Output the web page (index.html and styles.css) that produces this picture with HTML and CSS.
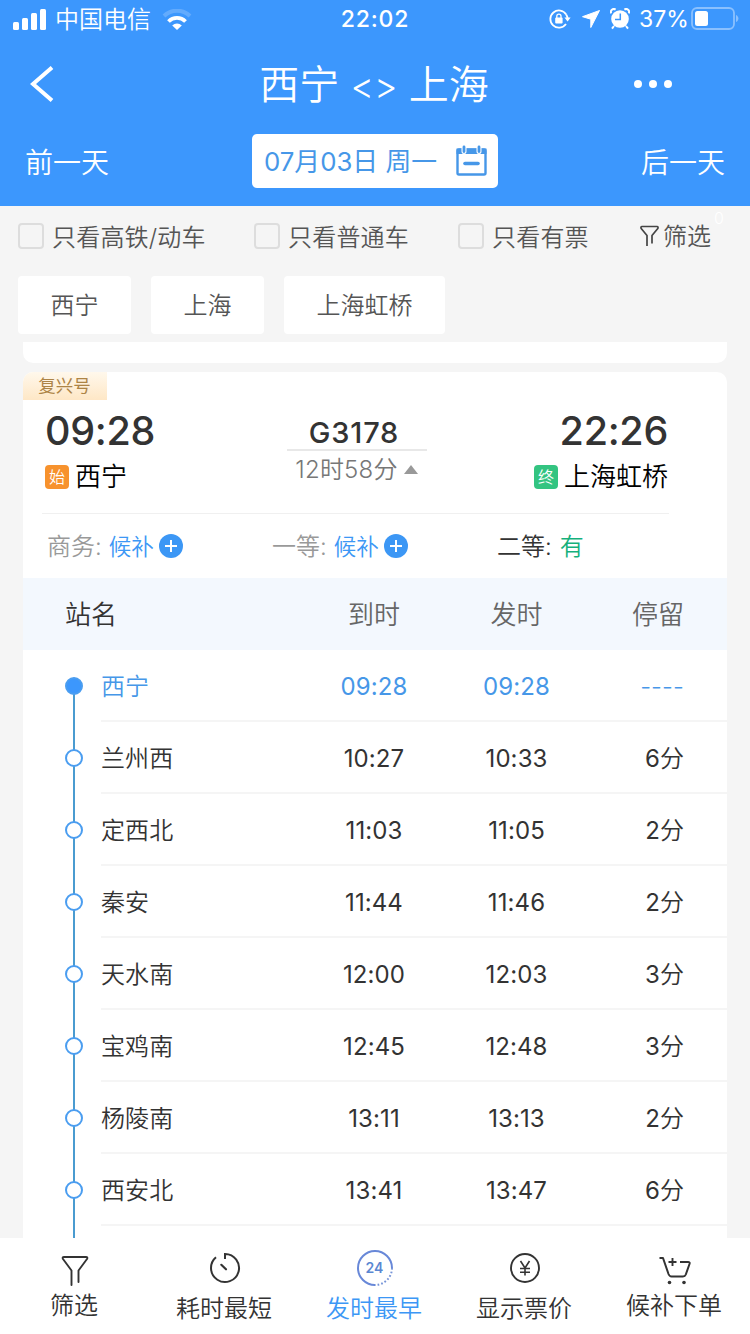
FILE: index.html
```html
<!DOCTYPE html>
<html lang="zh-CN">
<head>
    <meta charset="UTF-8">
    <meta name="viewport" content="width=device-width, initial-scale=1.0">
    <title>西宁 - 上海 车票查询</title>
    <link rel="stylesheet" href="styles.css">
</head>
<body>

<header class="header">
    <div class="status">
        <div class="status-left">
            <svg width="34" height="22" viewBox="0 0 34 22" fill="#fff">
                <rect x="0" y="13" width="6" height="8" rx="1.5"/>
                <rect x="9" y="9" width="6" height="12" rx="1.5"/>
                <rect x="18" y="4" width="6" height="17" rx="1.5"/>
                <rect x="27" y="0" width="6" height="21" rx="1.5"/>
            </svg>
            <span class="carrier">中国电信</span>
            <svg width="30" height="22" viewBox="0 0 30 22" fill="none" stroke="#fff">
                <path d="M2 7a18.5 18.5 0 0 1 26 0" stroke-width="4" opacity=".2"/>
                <path d="M6.5 12.5a12 12 0 0 1 17 0" stroke-width="3.8"/>
                <path d="M15 21l-4.8-4.5a7 7 0 0 1 9.6 0z" fill="#fff" stroke="none"/>
            </svg>
        </div>
        <div class="clock">22:02</div>
        <div class="status-right">
            <svg width="22" height="20" viewBox="0 0 22 20" fill="none" stroke="#fff" stroke-width="1.8">
                <path d="M17.2 5.4A8.6 8.6 0 1 0 17 15"/>
                <path d="M17.2 5.4a8.6 8.6 0 0 1 1.4 4.8"/>
                <path d="M15.4 8.4h6.2l-3 4z" fill="#fff" stroke="none"/>
                <rect x="6.2" y="8.6" width="7.4" height="5.8" rx="1" fill="#fff" stroke="none"/>
                <path d="M7.8 9V7.2a2.1 2.1 0 0 1 4.2 0V9" stroke-width="1.3"/>
            </svg>
            <svg class="arrow" width="20" height="20" viewBox="0 0 20 20" fill="#fff" stroke="#fff" stroke-linejoin="round"><path d="M18.5 1.5L1.5 7.700l8.300 2.500v8.300z"/></svg>
            <svg class="alarm" width="20" height="22" viewBox="0 0 20 22" fill="#fff">
                <circle cx="10" cy="11" r="8.8"/>
                <path d="M1.2 5.4A3 3 0 0 1 5.6 1.6M14.4 1.6a3 3 0 0 1 4.4 3.8M4 18l-2 2.6M16 18l2 2.6" fill="none" stroke="#fff" stroke-width="2"/>
                <path d="M10.3 5.5v6H5" fill="none" stroke="#3c97fd" stroke-width="1.5"/>
            </svg>
            <span class="percent">37%</span>
            <svg width="49" height="24" viewBox="0 0 49 24">
                <rect x="2" y="1" width="42" height="21" rx="5" fill="none" stroke="#fff" stroke-width="1.8" opacity=".4"/>
                <rect x="5" y="4" width="13" height="15" rx="2.5" fill="#fff"/>
                <path d="M46 8v7c1.6-.6 2.4-2 2.4-3.5S47.5 8.600 46 8z" fill="#fff" opacity=".4"/>
            </svg>
        </div>
    </div>

    <div class="nav">
        <svg class="back" width="24" height="36" viewBox="0 0 24 36" fill="none" stroke="#fff" stroke-width="4"><path d="M22 1.5L3 18l19 16.5"/></svg>
        <h1>西宁 <span class="swap">&lt;&gt;</span> 上海</h1>
        <div class="more"><i></i><i></i><i></i></div>
    </div>

    <div class="days">
        <a class="prev">前一天</a>
        <div class="date">
            <span>07月03日 周一</span>
            <svg width="31" height="31" viewBox="0 0 31 31" fill="none" stroke="#4697e8">
                <rect x="1.5" y="4.5" width="28" height="25" rx="1.5" stroke-width="2.4"/>
                <path d="M.5 3.5h30V9H.5z" fill="#4697e8" stroke="none"/>
                <path d="M8 2v4.5M23 2v4.5" stroke="#fff" stroke-width="5" stroke-linecap="round"/>
                <path d="M8 2v4.5M23 2v4.5" stroke-width="2.8" stroke-linecap="round"/>
                <path d="M9 18.5h13" stroke-width="3.6" stroke-linecap="round"/>
            </svg>
        </div>
        <a class="next">后一天</a>
    </div>
</header>

<main>
    <div class="filters">
        <label class="check"><span class="box"></span><span>只看高铁/动车</span></label>
        <label class="check"><span class="box"></span><span>只看普通车</span></label>
        <label class="check"><span class="box"></span><span>只看有票</span></label>
        <div class="filter">
            <svg width="19" height="22" viewBox="0 0 19 22" fill="none" stroke="#444" stroke-width="1.7" stroke-linejoin="round"><path d="M7 21v-10.5L1.2 3.5Q.5 1.5 2 1.5h15q1.5 0 .8 2L12 10.5V18.5"/></svg>
            <span>筛选</span>
            <em class="count">0</em>
        </div>
    </div>

    <div class="chips">
        <div class="chip">西宁</div>
        <div class="chip">上海</div>
        <div class="chip">上海虹桥</div>
    </div>

    <div class="card-end"></div>

    <section class="card">
        <div class="tag">复兴号</div>
        <div class="trip">
            <div class="from">
                <div class="time">09:28</div>
                <div class="station"><b class="mark start">始</b>西宁</div>
            </div>
            <div class="train">
                <div class="number">G3178</div>
                <div class="duration">12时58分<i class="up"></i></div>
            </div>
            <div class="to">
                <div class="time">22:26</div>
                <div class="station"><b class="mark end">终</b>上海虹桥</div>
            </div>
        </div>

        <div class="seats">
            <div class="seat"><span>商务:</span><span class="wait">候补</span>
                <svg width="24" height="24" viewBox="0 0 24 24"><circle cx="12" cy="12" r="12" fill="#3c97f5"/><path d="M12 6v12M6 12h12" stroke="#fff" stroke-width="2"/></svg>
            </div>
            <div class="seat"><span>一等:</span><span class="wait">候补</span>
                <svg width="24" height="24" viewBox="0 0 24 24"><circle cx="12" cy="12" r="12" fill="#3c97f5"/><path d="M12 6v12M6 12h12" stroke="#fff" stroke-width="2"/></svg>
            </div>
            <div class="seat open"><span>二等:</span><span class="has">有</span></div>
        </div>

        <div class="stops-head">
            <span class="name">站名</span><span>到时</span><span>发时</span><span class="stay">停留</span>
        </div>
        <ul class="stops">
            <li class="current"><div class="rail"><i></i></div><div class="row"><span class="name">西宁</span><span>09:28</span><span>09:28</span><span class="stay">----</span></div></li>
            <li><div class="rail"><i></i></div><div class="row"><span class="name">兰州西</span><span>10:27</span><span>10:33</span><span class="stay"><b>6</b>分</span></div></li>
            <li><div class="rail"><i></i></div><div class="row"><span class="name">定西北</span><span>11:03</span><span>11:05</span><span class="stay"><b>2</b>分</span></div></li>
            <li><div class="rail"><i></i></div><div class="row"><span class="name">秦安</span><span>11:44</span><span>11:46</span><span class="stay"><b>2</b>分</span></div></li>
            <li><div class="rail"><i></i></div><div class="row"><span class="name">天水南</span><span>12:00</span><span>12:03</span><span class="stay"><b>3</b>分</span></div></li>
            <li><div class="rail"><i></i></div><div class="row"><span class="name">宝鸡南</span><span>12:45</span><span>12:48</span><span class="stay"><b>3</b>分</span></div></li>
            <li><div class="rail"><i></i></div><div class="row"><span class="name">杨陵南</span><span>13:11</span><span>13:13</span><span class="stay"><b>2</b>分</span></div></li>
            <li><div class="rail"><i></i></div><div class="row"><span class="name">西安北</span><span>13:41</span><span>13:47</span><span class="stay"><b>6</b>分</span></div></li>
            <li class="more-stops"><div class="rail"></div></li>
        </ul>
    </section>
</main>

<footer class="tabs">
    <a class="tab high">
        <svg width="36" height="36" viewBox="0 0 36 36" fill="none" stroke="#333" stroke-width="1.9" stroke-linejoin="round" stroke-linecap="round"><path d="M14.5 35V20.5L6 9Q5 7 7 7h22q2 0 1 2L21.5 20.5V32"/></svg>
        <span>筛选</span>
    </a>
    <a class="tab">
        <svg width="36" height="36" viewBox="0 0 36 36" fill="none" stroke="#333" stroke-width="2"><path d="M18 9V4A14 14 0 1 1 9 7.3"/><path d="M14.3 14.8l4.7 4.5" stroke-width="2.2" stroke-linecap="round"/></svg>
        <span>耗时最短</span>
    </a>
    <a class="tab active">
        <svg width="36" height="36" viewBox="0 0 36 36" fill="none" stroke-width="2">
            <path d="M18 35A17 17 0 1 1 35 18" stroke="#6888d8"/>
            <path d="M35 18A17 17 0 0 1 18 35" stroke="#7795d8" stroke-dasharray="1.7 2"/>
            <text x="17.5" y="23" text-anchor="middle" fill="#5b87d2" class="h24">24</text>
        </svg>
        <span>发时最早</span>
    </a>
    <a class="tab">
        <svg width="36" height="36" viewBox="0 0 36 36" fill="none" stroke="#333" stroke-width="1.9"><circle cx="18" cy="18" r="14"/><path d="M13.5 11l4.5 7 4.5-7M18 18v7.5M13 18.5h10M13 22.2h10" stroke-width="1.6"/></svg>
        <span>显示票价</span>
    </a>
    <a class="tab high">
        <svg width="36" height="36" viewBox="0 0 36 36" fill="none" stroke="#333" stroke-width="2" stroke-linejoin="round">
            <path d="M2.5 8H6l5.5 16q1 2.5 3 2.5h11.5q2 0 2.8-2L32.5 14q.8-2-1.5-2H23"/>
            <path d="M15.5 8v8M11.5 12h8" stroke-width="1.9"/>
            <circle cx="12.5" cy="32.5" r="1.8" fill="#333" stroke="none"/><circle cx="27" cy="32.5" r="1.8" fill="#333" stroke="none"/>
        </svg>
        <span>候补下单</span>
    </a>
</footer>

</body>
</html>
```
FILE: styles.css
```css
* {
    box-sizing: border-box;
}
body {
    margin: 0;
    width: 750px;
    height: 1334px;
    overflow: hidden;
    display: flex;
    flex-direction: column;
    background-color: #f5f5f5;
    color: #333;
    font-family: Inter, "Noto Sans CJK SC", sans-serif;
    font-size: 24px;
    font-weight: 350;
    line-height: 30px;
}
svg {
    display: block;
    flex: none;
}
i, em, b {
    font-style: normal;
    font-weight: inherit;
}

/* Header */
.header {
    height: 206px;
    flex: none;
    background-color: #3c97fd;
    color: #fff;
}
.status {
    height: 40px;
    display: grid;
    grid-template-columns: 1fr 100px 1fr;
    align-items: center;
    padding: 0 11px 0 13px;
}
.status-left, .status-right {
    display: flex;
    align-items: center;
}
.status-left {
    height: 40px;
}
.status-right {
    justify-content: flex-end;
}
.carrier {
    margin: 0 11px 0 8px;
    line-height: 44px;
}
.clock {
    padding-right: 2px;
    text-align: center;
    font-size: 23px;
    font-weight: 500;
    letter-spacing: 0.8px;
}
.status-right, .clock {
    position: relative;
    top: -1px;
}
.arrow {
    margin-left: 10px;
}
.alarm {
    margin: 0 9px;
}
.percent {
    width: 51px;
    font-size: 23px;
    font-weight: 400;
}
.nav {
    height: 90px;
    display: flex;
    align-items: center;
    justify-content: space-between;
    padding: 0 78px 2px 30px;
}
h1 {
    margin: 0 0 0 60px;
    padding-top: 3px;
    font-size: 40px;
    font-weight: 350;
    line-height: 60px;
    white-space: nowrap;
}
.swap {
    font-size: 36px;
}
.more {
    display: flex;
    justify-content: flex-end;
    gap: 7px;
}
.more i {
    width: 8px;
    height: 8px;
    border-radius: 50%;
    background-color: #fff;
}
.days {
    display: flex;
    justify-content: space-between;
    align-items: center;
    padding: 4px 25px 0 25px;
    font-size: 28px;
}
.prev, .next {
    padding-top: 4px;
}
.date {
    width: 246px;
    height: 54px;
    display: flex;
    align-items: center;
    justify-content: space-between;
    padding: 0 11px 1px 12px;
    border-radius: 5px;
    background-color: #fff;
    color: #4697e8;
    font-size: 25.8px;
    font-weight: 400;
}
.date span {
    padding-top: 3px;
}

/* Filters */
.filters {
    height: 62px;
    display: flex;
    align-items: center;
    padding: 0 0 2px 18px;
    color: #555;
}
.check {
    display: flex;
    align-items: center;
    width: 236px;
}
.check:nth-child(2) {
    width: 204px;
}
.check:nth-child(3) {
    width: 182px;
}
.check span:last-child {
    padding-top: 4px;
    letter-spacing: 0.2px;
}
.box {
    width: 26px;
    height: 26px;
    margin-right: 8px;
    border: 2px solid #ddd;
    border-radius: 4px;
}
.filter {
    position: relative;
    display: flex;
    align-items: center;
    gap: 4px;
}
.filter span {
    padding-top: 2px;
}
.count {
    position: absolute;
    left: 74px;
    top: -12px;
    color: #fff;
    font-size: 16px;
    line-height: 20px;
}
.chips {
    display: flex;
    gap: 20px;
    padding: 8px 18px;
}
.chip {
    height: 58px;
    padding: 0 32.5px;
    border-radius: 4px;
    background-color: #fff;
    color: #555;
    line-height: 60px;
}
.card-end {
    height: 21px;
    margin: 0 23px 9px;
    border-radius: 0 0 10px 10px;
    background-color: #fff;
}

/* Train card */
main {
    height: 1032px;
    overflow: hidden;
}
.card {
    margin: 0 23px;
    border-radius: 10px 10px 0 0;
    background-color: #fff;
    overflow: hidden;
}
.tag {
    width: 84px;
    height: 28px;
    padding-right: 1px;
    background: linear-gradient(#fff8ec, #fee7c6);
    color: #ad8446;
    font-size: 17.5px;
    font-weight: 400;
    line-height: 27px;
    text-align: center;
}
.trip {
    height: 114px;
    margin: 0 58px 0 19px;
    display: grid;
    grid-template-columns: 1fr 140px 1fr;
    border-bottom: 1px solid #f0f0f0;
}
.from {
    padding-left: 3px;
}
.to {
    display: flex;
    flex-direction: column;
    align-items: flex-end;
    padding-right: 1px;
}
.time {
    height: 61px;
    font-size: 39.5px;
    font-weight: 500;
    letter-spacing: -0.3px;
    line-height: 63px;
}
.station {
    display: flex;
    align-items: center;
    color: #000;
    font-size: 26px;
    line-height: 32px;
}
.mark {
    width: 24px;
    height: 24px;
    margin-right: 6px;
    border-radius: 4px;
    color: #fff;
    font-size: 16px;
    line-height: 24px;
    text-align: center;
}
.start {
    background-color: #f7922d;
}
.end {
    background-color: #33c481;
}
.train {
    position: relative;
    left: 1px;
    padding-top: 15px;
    text-align: center;
}
.number {
    height: 36px;
    padding-right: 5px;
    border-bottom: 2px solid #e8e8e8;
    font-size: 29px;
    font-weight: 500;
    letter-spacing: 0.8px;
    line-height: 36px;
}
.duration {
    display: flex;
    align-items: center;
    justify-content: center;
    color: #777;
    letter-spacing: 0.2px;
    line-height: 38px;
}
.up {
    margin: -2px 0 0 6px;
    border: 7px solid transparent;
    border-top: 0;
    border-bottom: 9px solid #999;
}
.seats {
    height: 64px;
    display: grid;
    grid-template-columns: 225px 225px 1fr;
    padding: 0 0 1px 24px;
}
.seat {
    display: flex;
    align-items: center;
    color: #999;
}
.seat span {
    padding-top: 3px;
}
.wait {
    margin: 0 5px 0 7px;
    color: #3c97f5;
    font-size: 22.5px;
}
.open {
    color: #333;
}
.has {
    margin-left: 8px;
    color: #15b07c;
}

/* Stops */
.stops-head, .row {
    display: grid;
    grid-template-columns: 1fr 142px 143px 139px;
    align-items: center;
    text-align: center;
}
.stops-head {
    height: 72px;
    padding-top: 2px;
    background-color: #f3f8fe;
    color: #666;
    font-size: 26px;
}
.row {
    flex: 1;
    padding-top: 4px;
    border-bottom: 2px solid #f5f5f5;
    letter-spacing: 0.1px;
}
.row span, .row b {
    font-weight: 400;
}
.row .name, .row .stay {
    font-weight: 350;
}
.name {
    text-align: left;
}
.stops-head .name {
    padding-left: 42px;
    color: #333;
}
.stay {
    padding-right: 43px;
    text-align: right;
}
.stops {
    margin: 0;
    padding: 0;
    list-style: none;
}
.stops li {
    display: flex;
    height: 72px;
}
.rail {
    position: relative;
    width: 78px;
    padding: 27px 0 0 42px;
}
.rail::before {
    content: "";
    position: absolute;
    left: 50px;
    top: 0;
    bottom: 0;
    width: 2px;
    background-color: #4a9bd0;
}
.rail i {
    position: relative;
    display: block;
    width: 18px;
    height: 18px;
    border: 2px solid #4a9df0;
    border-radius: 50%;
    background-color: #fff;
}
.current {
    color: #4697e8;
}
.current .rail::before {
    top: 36px;
}
.current .rail i {
    background-color: #3c97fd;
}

/* Bottom tabs */
.tabs {
    height: 96px;
    flex: none;
    display: grid;
    grid-template-columns: repeat(5, 150px);
    background-color: #fff;
}
.tab {
    display: flex;
    flex-direction: column;
    align-items: center;
    padding-top: 12px;
    line-height: 46px;
}
.tab span {
    margin-left: -2px;
}
.high {
    line-height: 40px;
}
.active {
    color: #3c97f5;
}
.h24 {
    font-size: 14px;
    font-weight: 600;
}
```
